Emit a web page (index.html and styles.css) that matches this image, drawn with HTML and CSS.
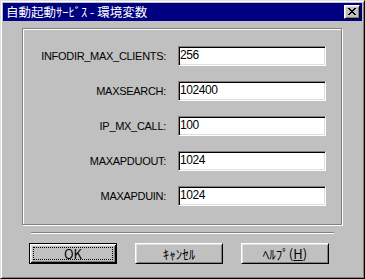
FILE: index.html
```html
<!DOCTYPE html>
<html lang="ja">
<head>
  <meta charset="UTF-8">
  <title>自動起動ｻｰﾋﾞｽ - 環境変数</title>
  <link rel="stylesheet" href="styles.css">
</head>
<body>
  <div class="window">
    <div class="titlebar">
      <span class="title">自動起動ｻｰﾋﾞｽ - 環境変数</span>
      <button class="close-btn" aria-label="閉じる">
        <svg width="8" height="7" viewBox="0 0 8 7" shape-rendering="crispEdges">
          <path d="M0 0h2v1h-2zM6 0h2v1h-2zM1 1h2v1h-2zM5 1h2v1h-2zM2 2h4v1h-4zM3 3h2v1h-2zM2 4h4v1h-4zM1 5h2v1h-2zM5 5h2v1h-2zM0 6h2v1h-2zM6 6h2v1h-2z" fill="#000"/>
        </svg>
      </button>
    </div>

    <div class="dialog-body">
      <div class="group">
        <label class="field-label" for="max-clients">INFODIR_MAX_CLIENTS:</label>
        <input class="field" id="max-clients" type="text" value="256">
        <label class="field-label" for="max-search">MAXSEARCH:</label>
        <input class="field" id="max-search" type="text" value="102400">
        <label class="field-label" for="mx-call">IP_MX_CALL:</label>
        <input class="field" id="mx-call" type="text" value="100">
        <label class="field-label" for="apdu-out">MAXAPDUOUT:</label>
        <input class="field" id="apdu-out" type="text" value="1024">
        <label class="field-label" for="apdu-in">MAXAPDUIN:</label>
        <input class="field" id="apdu-in" type="text" value="1024">
      </div>

      <hr class="separator">

      <div class="buttons">
        <button class="btn btn-default"><span class="focus">OK</span></button>
        <button class="btn">ｷｬﾝｾﾙ</button>
        <button class="btn">ﾍﾙﾌﾟ(<u>H</u>)</button>
      </div>
    </div>
  </div>
</body>
</html>
```

FILE: styles.css
```css
/* Win95 style dialog */
body {
  margin: 0;
  background-color: #c0c0c0;
  font-family: "Liberation Sans", Arial, sans-serif;
  color: #000;
}
.window {
  width: 365px;
  height: 279px;
  box-sizing: border-box;
  background-color: #c0c0c0;
  border: 1px solid;
  border-color: #dfdfdf #000 #000 #dfdfdf;
  box-shadow: inset 1px 1px #fff, inset -1px -1px #808080;
  padding: 2px;
}
.titlebar {
  height: 18px;
  background-color: #000080;
  display: flex;
  align-items: center;
  justify-content: space-between;
  padding: 0 2px 0 3px;
  color: #fff;
}
.title {
  font-family: "Noto Sans CJK JP", sans-serif;
  font-size: 12.5px;
  line-height: 18px;
  white-space: nowrap;
}
.close-btn {
  width: 16px;
  height: 14px;
  box-sizing: border-box;
  padding: 2px 0 0 3px;
  margin: 0;
  background-color: #c0c0c0;
  border: 1px solid;
  border-color: #fff #000 #000 #fff;
  box-shadow: inset 1px 1px #dfdfdf, inset -1px -1px #808080;
  display: flex;
  align-items: flex-start;
  justify-content: flex-start;
}
.close-btn svg {
  display: block;
}
.dialog-body {
  padding: 7px 0 0 19px;
}
.group {
  width: 320px;
  height: 197px;
  box-sizing: border-box;
  border: 1px solid #808080;
  box-shadow: inset 1px 1px #fff, 1px 1px #fff;
  display: grid;
  grid-template-columns: 143px 148px;
  column-gap: 12px;
  row-gap: 15px;
  align-content: start;
  align-items: center;
  padding-top: 17px;
}
.field-label {
  justify-self: end;
  font-size: 11px;
  letter-spacing: -0.3px;
  white-space: nowrap;
}
.field {
  width: 148px;
  height: 20px;
  box-sizing: border-box;
  margin: 0;
  padding: 0 2px 3px 1px;
  border: 1px solid;
  border-color: #808080 #fff #fff #808080;
  box-shadow: inset 1px 1px #000, inset -1px -1px #dfdfdf;
  background-color: #fff;
  font-family: "Liberation Sans", Arial, sans-serif;
  font-size: 12px;
  letter-spacing: -0.4px;
  color: #000;
  outline: none;
}
.separator {
  width: 303px;
  height: 0;
  margin: 7px 0 0 9px;
  border: 0;
  border-top: 1px solid #808080;
  border-bottom: 1px solid #fff;
}
.buttons {
  display: flex;
  gap: 18px;
  margin: 9px 0 0 7px;
}
.btn {
  width: 88px;
  height: 21px;
  box-sizing: border-box;
  margin: 0;
  padding: 0;
  background-color: #c0c0c0;
  border: 1px solid;
  border-color: #fff #000 #000 #fff;
  box-shadow: inset 1px 1px #dfdfdf, inset -1px -1px #808080;
  font-family: "Noto Sans CJK JP", sans-serif;
  font-size: 13px;
  line-height: 1;
  color: #000;
}
.btn-default {
  border-color: #000;
  box-shadow: inset 1px 1px #fff, inset -1px -1px #000, inset 2px 2px #dfdfdf, inset -2px -2px #808080;
  padding: 3px;
}
.focus {
  display: flex;
  align-items: center;
  justify-content: center;
  height: 100%;
  box-sizing: border-box;
  border: 1px dotted #000;
}
```
